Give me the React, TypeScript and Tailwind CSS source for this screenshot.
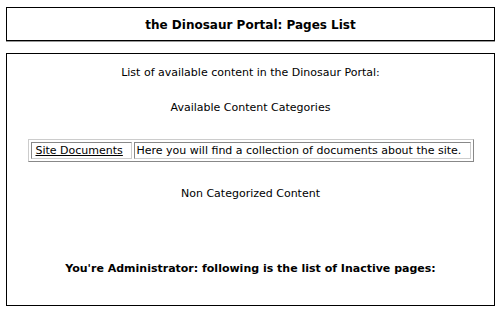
export default function App() {
  const font = { fontFamily: '"DejaVu Sans", Verdana, sans-serif' };
  return (
    <div className="w-[500px] h-[311px] bg-white text-black" style={font}>
      <div className="pt-[7px] pl-[6px] pr-[5px]">
        <div className="h-[34px] border border-black shadow-[0_1px_0_#999] flex items-center justify-center pt-[2px]">
          <span className="font-bold text-[12px]">the Dinosaur Portal: Pages List</span>
        </div>
        <div className="mt-[12px] h-[253px] border border-black flex flex-col items-center text-[11px]">
          <div className="mt-[11px]">List of available content in the Dinosaur Portal:</div>
          <div className="mt-[18px]">Available Content Categories</div>
          <table className="mt-[23px] w-[446px] border border-t-[#ccc] border-l-[#ccc] border-b-[#888] border-r-[#888] border-separate border-spacing-[2px]">
            <tbody>
              <tr>
                <td className="w-[101px] border border-t-[#888] border-l-[#888] border-b-[#ccc] border-r-[#ccc] pl-[4px] pr-0 py-0 leading-[15px]">
                  <a className="underline">Site Documents</a>
                </td>
                <td className="border border-t-[#888] border-l-[#888] border-b-[#ccc] border-r-[#ccc] px-[2px] py-0 leading-[15px]">
                  Here you will find a collection of documents about the site.
                </td>
              </tr>
            </tbody>
          </table>
          <div className="mt-[24px]">Non Categorized Content</div>
          <div className="mt-[58px] font-bold">You're Administrator: following is the list of Inactive pages:</div>
        </div>
      </div>
    </div>
  );
}
